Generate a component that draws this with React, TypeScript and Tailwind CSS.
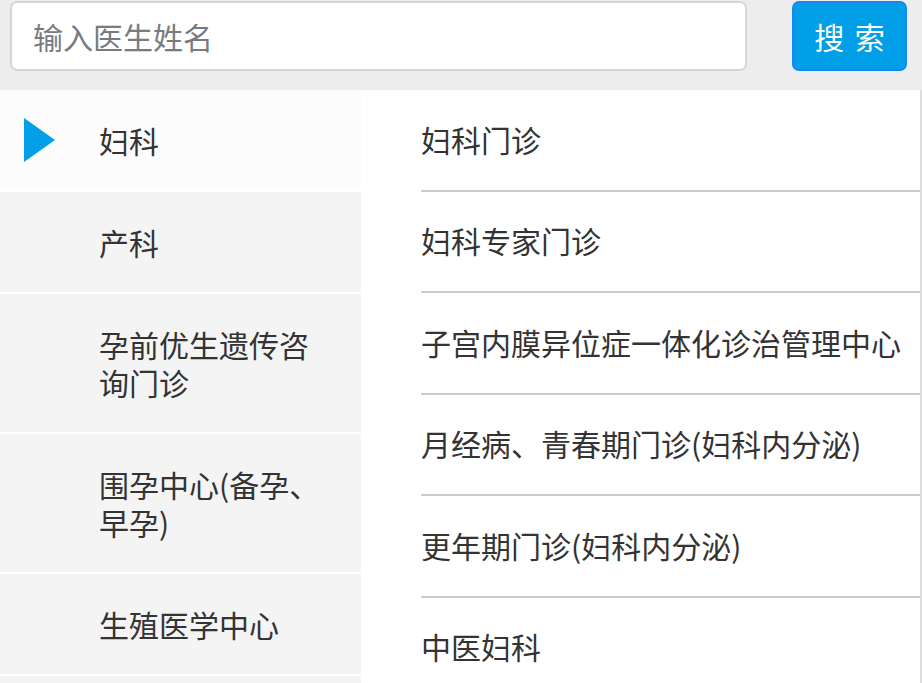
import { useState } from 'react'

const departments = ['妇科', '产科', '孕前优生遗传咨询门诊', '围孕中心(备孕、早孕)', '生殖医学中心']

const clinics = ['妇科门诊', '妇科专家门诊', '子宫内膜异位症一体化诊治管理中心', '月经病、青春期门诊(妇科内分泌)', '更年期门诊(妇科内分泌)', '中医妇科']

export default function App() {
  const [active, setActive] = useState(0)
  const [keyword, setKeyword] = useState('')

  return (
    <div
      className="w-[922px] h-[683px] overflow-hidden bg-white text-[#333333]"
      style={{ fontFamily: '"Microsoft YaHei", "Noto Sans CJK SC", "Noto Sans", sans-serif' }}
    >
      <div className="flex items-start h-[90px] bg-[#ededed] pt-px pl-[10px] pr-[15px]">
        <input
          value={keyword}
          onChange={(e) => setKeyword(e.target.value)}
          placeholder="输入医生姓名"
          className="w-[737px] h-[70px] rounded-[7px] border-2 border-[#d2d6db] bg-white pl-[21px] text-[30px] outline-none placeholder:text-[#777b80]"
        />
        <button className="ml-auto w-[115px] h-[70px] rounded-[7px] border-2 border-[#1a86f5] bg-[#009fe8] text-[30px] text-white tracking-[2px] pl-[2px]">
          搜 索
        </button>
      </div>

      <div className="flex">
        <ul className="w-[361px] shrink-0 bg-[#f4f4f4] h-[600px]">
          {departments.map((d, i) => (
            <li
              key={d}
              onClick={() => setActive(i)}
              className={`relative flex items-center py-[31px] pl-[99px] pr-[30px] border-b-2 border-white text-[30px] leading-[38px] cursor-pointer ${
                i === active ? 'bg-[#fcfcfc]' : 'bg-[#f4f4f4]'
              }`}
            >
              {i === active && (
                <svg className="absolute left-[24px] top-[28px]" width="31" height="44" viewBox="0 0 31 44">
                  <polygon points="0,0 31,22 0,44" fill="#009fe8" />
                </svg>
              )}
              <span>{d}</span>
            </li>
          ))}
        </ul>

        <ul className="flex-1 pl-[60px] border-r-2 border-[#dddddd]">
          {clinics.map((c) => (
            <li key={c} className="h-[101.5px] flex items-center pb-[2px] border-b-2 border-[#cccccc] text-[30px] leading-[38px] whitespace-nowrap">
              {c}
            </li>
          ))}
        </ul>
      </div>
    </div>
  )
}
